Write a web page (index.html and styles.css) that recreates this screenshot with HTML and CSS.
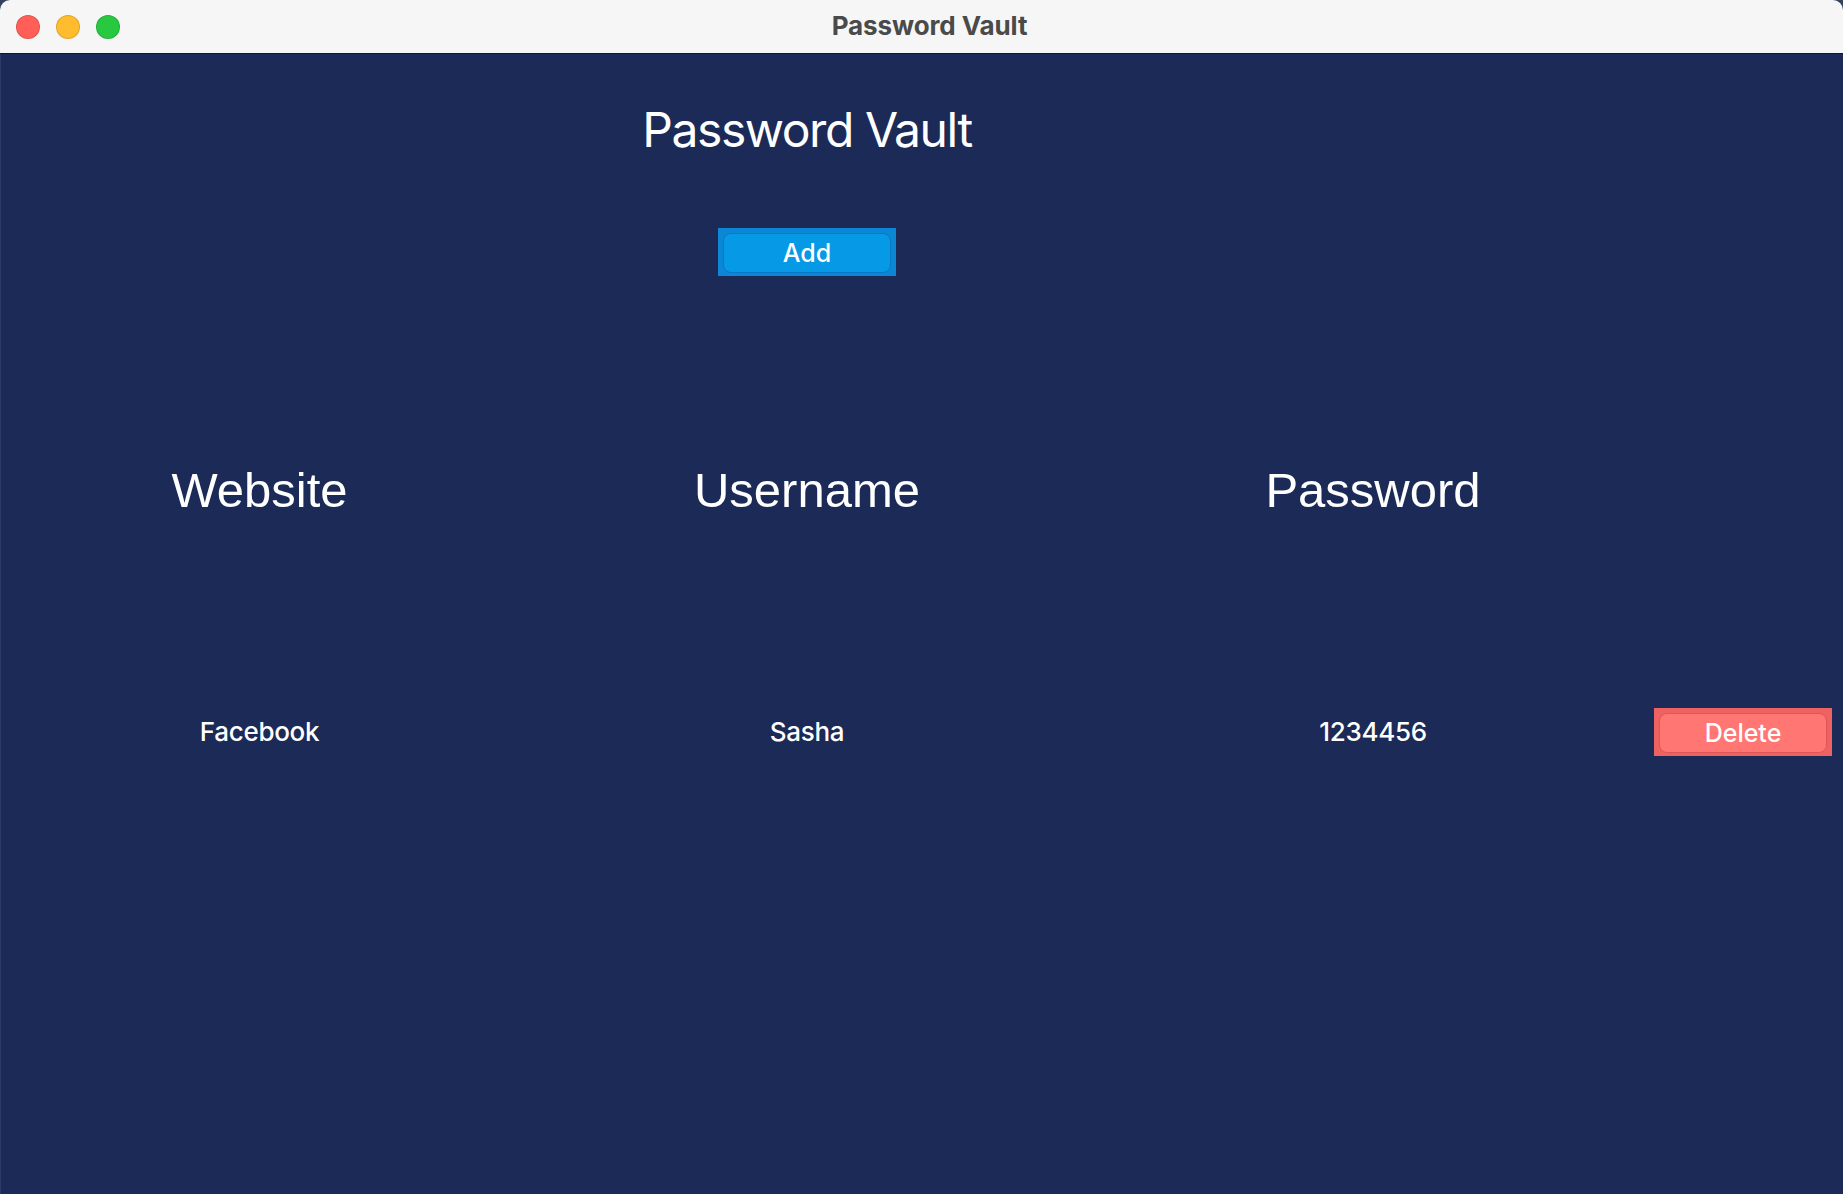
FILE: index.html
```html
<!DOCTYPE html>
<html lang="en">
<head>
<meta charset="utf-8">
<title>Password Vault</title>
<link rel="stylesheet" href="styles.css">
</head>
<body>
<div class="window">
  <header class="titlebar">
    <div class="lights">
      <span class="light red"></span>
      <span class="light yellow"></span>
      <span class="light green"></span>
    </div>
    <div class="title">Password Vault</div>
  </header>
  <main class="vault">
    <div class="grid">
      <h1 class="heading col-2">Password Vault</h1>
      <div class="add-row col-2">
        <button class="btn btn-add"><span class="btn-face">Add</span></button>
      </div>
      <div class="col-head col-1">Website</div>
      <div class="col-head col-2 r3">Username</div>
      <div class="col-head col-3 r3">Password</div>
      <div class="cell col-1">Facebook</div>
      <div class="cell col-2 r4">Sasha</div>
      <div class="cell col-3 r4">1234456</div>
      <div class="del-cell col-4 r4">
        <button class="btn btn-del"><span class="btn-face">Delete</span></button>
      </div>
    </div>
  </main>
</div>
</body>
</html>
```

FILE: styles.css
```css
html, body {
  margin: 0;
  padding: 0;
  height: 100%;
  background: #34425f;
}

.window {
  height: 100%;
  display: flex;
  flex-direction: column;
  border-radius: 10px 10px 0 0;
  overflow: hidden;
  background: #1b2a56;
}

.titlebar {
  height: 53px;
  flex: none;
  background: #f6f6f6;
  border-bottom: 1px solid #0d1633;
  display: flex;
  align-items: center;
  position: relative;
}

.lights {
  display: flex;
  gap: 16px;
  padding-left: 16px;
}

.light {
  width: 22px;
  height: 22px;
  border-radius: 50%;
  border: 1px solid rgba(0, 0, 0, 0.12);
}
.red { background: #ff5f57; }
.yellow { background: #febc2e; }
.green { background: #28c840; }

.title {
  position: absolute;
  left: 0;
  right: 0;
  top: 0;
  bottom: 0;
  display: flex;
  align-items: center;
  justify-content: center;
  padding-left: 16px;
  padding-bottom: 2px;
  font-family: Inter, "Noto Sans", sans-serif;
  font-weight: 700;
  font-size: 26px;
  color: #4a4a4a;
  letter-spacing: -0.1px;
}

.vault {
  flex: 1;
  border-left: 1px solid #2b3a66;
  padding-top: 46px;
}

.grid {
  display: grid;
  grid-template-columns: 517px 578px 554px 186px;
  align-items: center;
  color: #ffffff;
}

.col-1 { grid-column: 1; }
.col-2 { grid-column: 2; }
.col-3 { grid-column: 3; }
.col-4 { grid-column: 4; }
.r3 { grid-row: 3; }
.r4 { grid-row: 4; }

.heading {
  grid-row: 1;
  margin: 0;
  height: 60px;
  line-height: 60px;
  text-align: center;
  font-family: Inter, "Noto Sans", sans-serif;
  font-weight: 400;
  font-size: 48px;
  letter-spacing: -1.45px;
}

.add-row {
  grid-row: 2;
  margin-top: 68px;
  display: flex;
  justify-content: center;
}

.btn {
  border: none;
  margin: 0;
  display: flex;
  cursor: pointer;
  font-family: Inter, "Noto Sans", sans-serif;
  font-weight: 500;
  font-size: 25px;
  color: #ffffff;
  width: 178px;
  height: 48px;
  padding: 5px 5px 3px 5px;
}

.btn-face {
  flex: 1;
  display: flex;
  align-items: center;
  justify-content: center;
  border-radius: 8px;
}

.btn-add {
  background: #0b87d6;
}
.btn-add .btn-face {
  background: #0699e6;
  border: 1px solid #0a78c6;
}

.btn-del {
  background: #ee6262;
}
.btn-del .btn-face {
  background: #ff7673;
  border: 1px solid #e05656;
}

.col-head {
  grid-row: 3;
  margin-top: 184px;
  height: 60px;
  line-height: 60px;
  text-align: center;
  font-family: "Liberation Sans", Arial, sans-serif;
  font-size: 49px;
}

.cell {
  grid-row: 4;
  margin-top: 188px;
  height: 48px;
  line-height: 48px;
  text-align: center;
  font-family: Inter, "Noto Sans", sans-serif;
  font-weight: 500;
  font-size: 26px;
  letter-spacing: -0.3px;
}

.del-cell {
  margin-top: 188px;
  display: flex;
  justify-content: center;
}
```
